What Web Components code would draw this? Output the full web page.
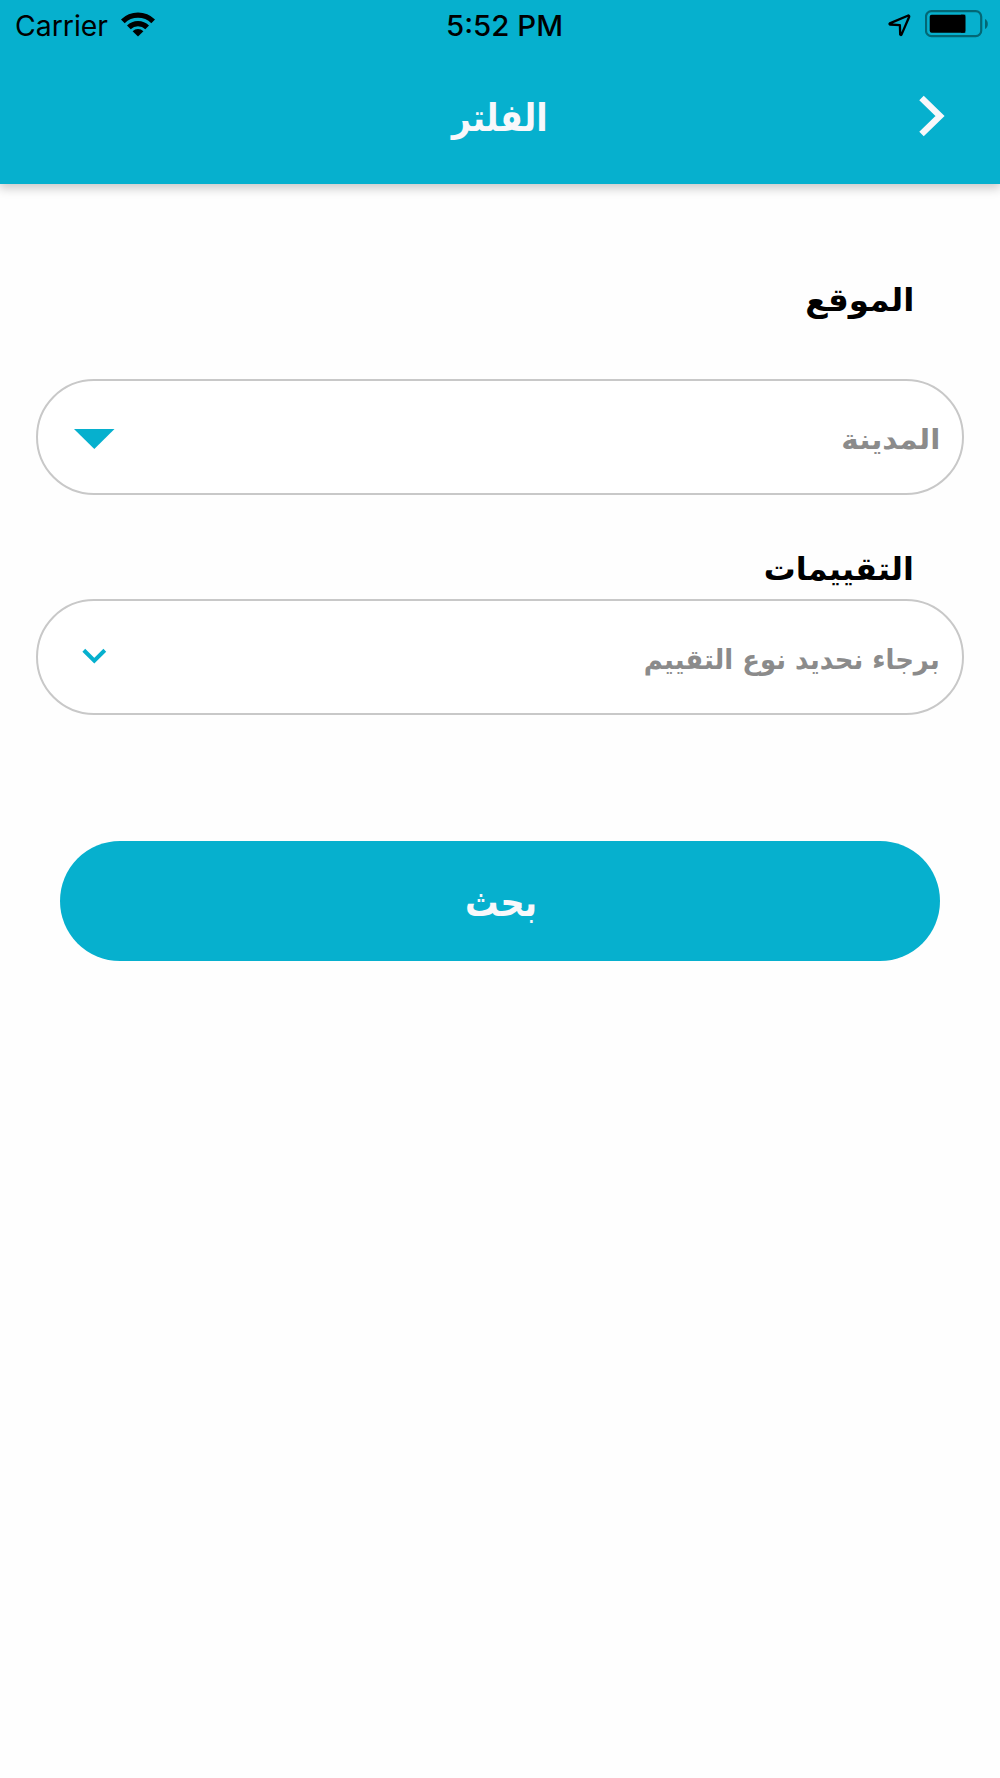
<!DOCTYPE html>
<html lang="ar" dir="rtl">
<head>
<meta charset="utf-8">
<title>الفلتر</title>
<style>
	body {
		margin: 0;
		background: #fefefe;
		font-family: "DejaVu Sans", sans-serif;
		--accent: #06b0ce;
	}
</style>
</head>
<body>
<filter-page></filter-page>
<script>
class FitText extends HTMLElement {
	constructor(){
		super();
		this.attachShadow({mode:"open"});
		this.shadowRoot.innerHTML = /*html*/`
			<style>
				:host {
					display: block;
					white-space: nowrap;
				}
				span {
					display: inline-block;
					transform-origin: var(--origin, right) center;
				}
			</style>
			<span><slot></slot></span>
		`;
	}

	// squeezes the text to the width given in the "width" attribute
	connectedCallback(){
		const span = this.shadowRoot.querySelector("span");
		const width = parseFloat(this.getAttribute("width"));
		const stretch = width/span.getBoundingClientRect().width;
		span.style.transform = `scaleX(${stretch})`;
	}
}

class StatusBar extends HTMLElement {
	constructor(){
		super();
		this.attachShadow({mode:"open"});
		this.shadowRoot.innerHTML = /*html*/`
			<style>
				:host {
					display: grid;
					grid-template-columns: 1fr auto 1fr;
					align-items: center;
					direction: ltr;
					height: 50px;
					padding: 0 12px 0 15px;
					font: 28px Inter, sans-serif;
					color: #000;
					--origin: left;
				}
				.side {
					display: flex;
					align-items: center;
				}
				.right {
					justify-content: flex-end;
				}
				.carrier {
					width: 92px;
				}
				.carrier, .time {
					padding-top: 1px;
				}
				.time {
					width: 117px;
					margin-left: 5px;
					font-weight: 500;
				}
				svg {
					display: block;
				}
				.wifi {
					margin: -2px 0 0 13px;
				}
				.location {
					margin-right: 14px;
				}
				.battery {
					margin-top: -2px;
				}
			</style>
			<div class="side">
				<fit-text class="carrier" width="93">Carrier</fit-text>
				<svg class="wifi" width="36" height="26" viewBox="0 0 36 26">
					<path d="M1 8.5A24 24 0 0 1 35 8.5L31.3 12.2A18.8 18.8 0 0 0 4.7 12.2Z"/>
					<path d="M7 14.5A15.6 15.6 0 0 1 29 14.5L25.3 18.2A10.4 10.4 0 0 0 10.7 18.2Z"/>
					<path d="M12.6 20.2A7.6 7.6 0 0 1 23.4 20.2L18 25.5Z"/>
				</svg>
			</div>
			<fit-text class="time" width="117">5:52 PM</fit-text>
			<div class="side right">
				<svg class="location" width="23" height="23" viewBox="0 0 23 23">
					<path d="M21 1.8Q20.4 1.3 19.7 1.7L1.8 9.4Q1.1 10 1.9 10.5L11.9 11.2L12.2 20.6Q12.9 21.4 13.5 20.6L21.1 3Q21.4 2.2 21 1.8Z" fill="none" stroke="#000" stroke-width="2.3" stroke-linejoin="round"/>
				</svg>
				<svg class="battery" width="63" height="28" viewBox="0 0 63 28">
					<rect x="1" y="1.2" width="55.2" height="25" rx="5.5" fill="none" stroke="#036775" stroke-width="2.2"/>
					<rect x="4.7" y="4.7" width="35.6" height="18" rx="2"/>
					<rect x="36" y="4.7" width="4.3" height="18"/>
					<path d="M60 9Q62.8 10.4 62.8 14T60 19Z" fill="#036775"/>
				</svg>
			</div>
		`;
	}
}

class NavHeader extends HTMLElement {
	constructor(){
		super();
		this.attachShadow({mode:"open"});
		this.shadowRoot.innerHTML = /*html*/`
			<style>
				:host {
					display: block;
					background: var(--accent);
					box-shadow: 0 3px 10px 1px #00000038;
				}
				.bar {
					display: grid;
					grid-template-columns: 1fr auto 1fr;
					align-items: center;
					box-sizing: border-box;
					height: 134px;
					padding: 0 55px;
					color: #f8f8fb;
				}
				.title {
					display: flex;
					justify-content: center;
					width: 96px;
					padding-top: 1px;
					font-size: 38px;
					font-weight: bold;
					--origin: center;
				}
				svg {
					display: block;
					margin-top: -2px;
				}
			</style>
			<status-bar></status-bar>
			<div class="bar">
				<svg width="26" height="42" viewBox="0 0 26 42">
					<path d="M2.5 3L21 21L2.5 39" fill="none" stroke="currentColor" stroke-width="6.4"/>
				</svg>
				<div class="title"><slot></slot></div>
			</div>
		`;
	}
}

class SelectField extends HTMLElement {
	constructor(){
		super();
		this.attachShadow({mode:"open"});
		this.shadowRoot.innerHTML = /*html*/`
			<style>
				:host {
					display: flex;
					align-items: center;
					justify-content: space-between;
					box-sizing: border-box;
					height: 116px;
					padding: 0 22px 0 36px;
					border: 2px solid #c8c8c8;
					border-radius: 58px;
					background: #fff;
					color: #8b8b8b;
					font-size: 27.5px;
					font-weight: bold;
				}
				.text {
					padding-top: 4px;
				}
			</style>
			<div class="text"><slot></slot></div>
			<slot name="icon"></slot>
		`;
	}
}

class SubmitButton extends HTMLElement {
	constructor(){
		super();
		this.attachShadow({mode:"open"});
		this.shadowRoot.innerHTML = /*html*/`
			<style>
				:host {
					display: block;
				}
				button {
					display: flex;
					align-items: center;
					justify-content: center;
					box-sizing: border-box;
					width: 100%;
					height: 120.5px;
					padding: 2px 0 0 2px;
					border: 0;
					border-radius: 61px;
					background: var(--accent);
					color: #f8f8fb;
					font: bold 40px "DejaVu Sans", sans-serif;
					--origin: center;
				}
			</style>
			<button><slot></slot></button>
		`;
	}
}

class FilterPage extends HTMLElement {
	constructor(){
		super();
		this.attachShadow({mode:"open"});
		this.shadowRoot.innerHTML = /*html*/`
			<style>
				:host {
					display: block;
					min-height: 1778px;
				}
				main {
					padding: 86px 36px 0;
				}
				h2 {
					margin: 0;
					padding-right: 50px;
					font-size: 32px;
					line-height: 60px;
					font-weight: bold;
					color: #000;
				}
				.city {
					margin: 49px 0 44px;
				}
				.icon {
					display: block;
					width: 46px;
					height: 46px;
					color: var(--accent);
				}
				submit-button {
					margin: 125.5px 24px 0;
				}
			</style>
			<nav-header><fit-text width="96">الفلتر</fit-text></nav-header>
			<main>
				<h2><fit-text width="109">الموقع</fit-text></h2>
				<select-field class="city">
					<fit-text width="99">المدينة</fit-text>
					<svg slot="icon" class="icon" viewBox="0 0 46 46">
						<path d="M0 15H40.5L20.3 35Z" fill="currentColor"/>
					</svg>
				</select-field>
				<h2><fit-text width="150">التقييمات</fit-text></h2>
				<select-field>
					<fit-text width="296">برجاء نحديد نوع التقييم</fit-text>
					<svg slot="icon" class="icon" viewBox="0 0 46 46">
						<path d="M9.8 16.3L20.3 26.6L30.8 16.3" fill="none" stroke="currentColor" stroke-width="4"/>
					</svg>
				</select-field>
				<submit-button><fit-text width="72">بحث</fit-text></submit-button>
			</main>
		`;
	}
}

customElements.define("fit-text",FitText);
customElements.define("status-bar",StatusBar);
customElements.define("nav-header",NavHeader);
customElements.define("select-field",SelectField);
customElements.define("submit-button",SubmitButton);
customElements.define("filter-page",FilterPage);
</script>
</body>
</html>
